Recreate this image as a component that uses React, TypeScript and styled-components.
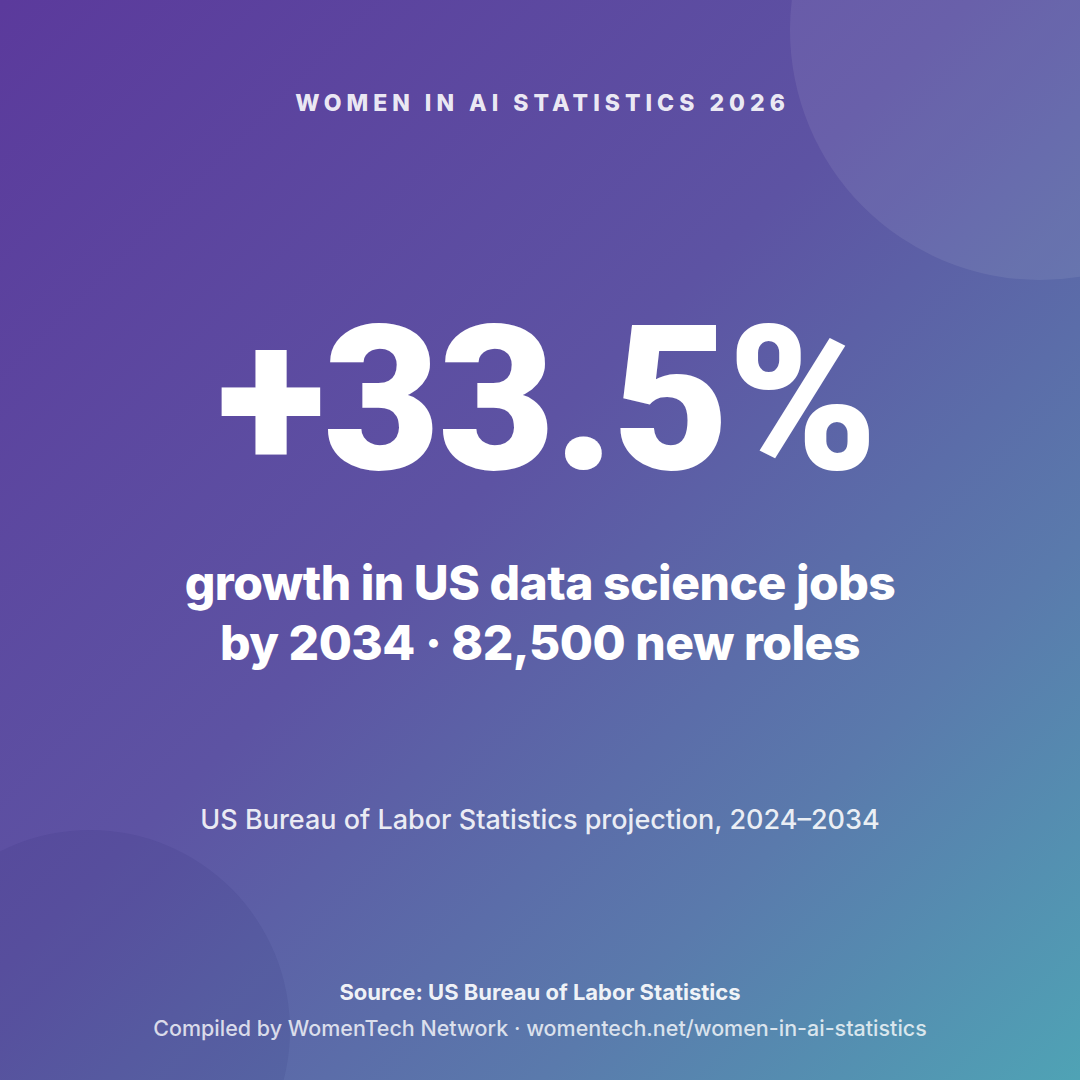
import React from "react";
import styled, { createGlobalStyle } from "styled-components";

const Global = createGlobalStyle`
  html, body { margin: 0; padding: 0; }
  body { font-family: Inter, "Noto Sans", sans-serif; }
`;

const Canvas = styled.div`
  position: relative;
  width: 1080px;
  height: 1080px;
  overflow: hidden;
  background: linear-gradient(135deg, #5b3a9c 0%, #5d53a3 45%, #5a7aac 75%, #4fa3b5 100%);
  display: flex;
  flex-direction: column;
  align-items: center;
  color: #fff;
  text-align: center;
`;

const Blob = styled.div<{ $size: number; $tint: string }>`
  position: absolute;
  width: ${(p) => p.$size}px;
  height: ${(p) => p.$size}px;
  border-radius: 50%;
  background: ${(p) => p.$tint};
  pointer-events: none;
`;

const BlobTop = styled(Blob)`
  left: 790px;
  top: -220px;
`;

const BlobBottom = styled(Blob)`
  left: -110px;
  top: 830px;
`;

const Content = styled.div`
  position: relative;
  display: flex;
  flex-direction: column;
  align-items: center;
  width: 100%;
  height: 100%;
`;

const Eyebrow = styled.div`
  margin-top: 89px;
  font-size: 23px;
  font-weight: 800;
  letter-spacing: 5px;
  line-height: 28px;
  color: rgba(255, 255, 255, 0.9);
  padding-left: 5px;
`;

const BigStat = styled.div`
  margin-top: 208px;
  font-family: Roboto, Inter, sans-serif;
  font-size: 202px;
  font-weight: 900;
  letter-spacing: -2px;
  line-height: 1;
  height: 150px;
  display: flex;
  align-items: center;
  padding-left: 13px;
`;

const Headline = styled.div`
  font-size: 48px;
  font-weight: 800;
  line-height: 60px;
  letter-spacing: -0.5px;
`;

const Note = styled.div`
  font-size: 27px;
  font-weight: 500;
  line-height: 34px;
  color: rgba(255, 255, 255, 0.88);
`;

const Footer = styled.div`
  margin-top: auto;
  margin-bottom: 38px;
  display: flex;
  flex-direction: column;
  align-items: center;
  gap: 8px;
`;

const Source = styled.div`
  font-size: 22px;
  font-weight: 700;
  line-height: 28px;
  color: rgba(255, 255, 255, 0.92);
`;

const Credit = styled.div`
  font-size: 21.5px;
  font-weight: 500;
  line-height: 28px;
  color: rgba(255, 255, 255, 0.78);
`;

const Spacer = styled.div<{ $h: number }>`
  height: ${(p) => p.$h}px;
  flex: none;
`;

export default function App() {
  return (
    <>
      <Global />
      <Canvas>
        <BlobTop $size={500} $tint="rgba(255,255,255,0.08)" />
        <BlobBottom $size={400} $tint="rgba(20,20,80,0.07)" />
        <Content>
          <Eyebrow>WOMEN IN AI STATISTICS 2026</Eyebrow>
          <BigStat>+33.5%</BigStat>
          <Spacer $h={78} />
          <Headline>
            growth in US data science jobs
            <br />
            by 2034 · 82,500 new roles
          </Headline>
          <Spacer $h={130} />
          <Note>US Bureau of Labor Statistics projection, 2024–2034</Note>
          <Footer>
            <Source>Source: US Bureau of Labor Statistics</Source>
            <Credit>Compiled by WomenTech Network · womentech.net/women-in-ai-statistics</Credit>
          </Footer>
        </Content>
      </Canvas>
    </>
  );
}
